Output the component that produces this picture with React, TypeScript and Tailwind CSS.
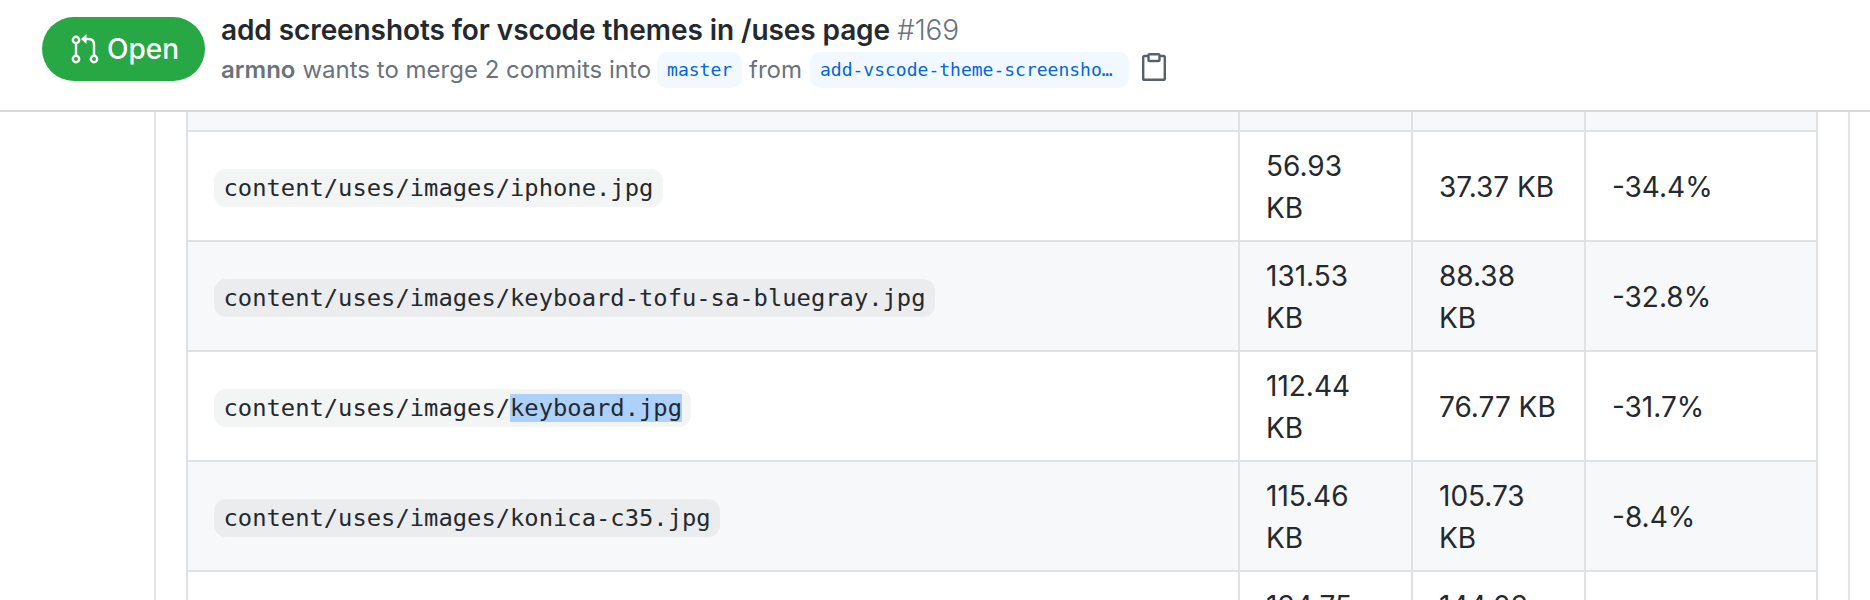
import React from "react";

const rows: { path: string; sel?: string; a: string; b: string; p: string }[] = [
  { path: "content/uses/images/iphone.jpg", a: "56.93 KB", b: "37.37 KB", p: "-34.4%" },
  { path: "content/uses/images/keyboard-tofu-sa-bluegray.jpg", a: "131.53 KB", b: "88.38 KB", p: "-32.8%" },
  { path: "content/uses/images/", sel: "keyboard.jpg", a: "112.44 KB", b: "76.77 KB", p: "-31.7%" },
  { path: "content/uses/images/konica-c35.jpg", a: "115.46 KB", b: "105.73 KB", p: "-8.4%" },
  { path: "content/uses/images/lens.jpg", a: "134.75 KB", b: "144.03 KB", p: "+6.9%" },
];

const PrIcon = () => (
  <svg width="28" height="32" viewBox="0 0 28 32" fill="none" stroke="currentColor" strokeWidth="2.4" className="shrink-0">
    <circle cx="5" cy="7" r="3.200" />
    <path d="M5 10.200V22.800" />
    <circle cx="5" cy="26" r="3.200" />
    <circle cx="23" cy="26" r="3.200" />
    <path d="M23 22.800V11.500Q23 6 17.500 6H14" />
    <path d="M10 6L15.500 1V11Z" fill="currentColor" stroke="none" />
  </svg>
);

const Clip = () => (
  <svg width="24" height="28" viewBox="0 0 24 28" fill="none" stroke="#586069" strokeWidth="2.4" className="shrink-0">
    <path d="M6 3H2.600a1.400 1.400 0 0 0-1.400 1.400v21a1.400 1.400 0 0 0 1.400 1.400h18.800a1.400 1.400 0 0 0 1.400-1.400v-21A1.400 1.400 0 0 0 21.400 3H18" />
    <rect x="6.500" y="1.200" width="11" height="6.800" rx="1" />
  </svg>
);

export default function App() {
  return (
    <div className="h-[600px] w-[1870px] overflow-hidden bg-white font-['Inter',sans-serif] text-[#24292e]">
      <header className="flex h-[112px] items-start border-b-2 border-[#d8d9da] bg-white pl-[42px]">
        <div className="mt-[17px] flex h-[64px] w-[163px] items-center justify-center gap-[8px] rounded-full bg-[#28a745] pl-[3px] text-[28px] font-[550] text-white">
          <PrIcon />
          <span>Open</span>
        </div>
        <div className="ml-[16px] mt-[12px]">
          <div className="text-[28px] leading-[36px] font-semibold tracking-[-0.09px] whitespace-nowrap">
            add screenshots for vscode themes in /uses page{" "}
            <span className="font-light text-[#6a737d]">#169</span>
          </div>
          <div className="mt-[4px] flex items-center text-[24px] leading-[36px] whitespace-nowrap text-[#6a737d]">
            <span className="font-semibold">armno</span>
            <span className="ml-[7px]">wants to merge 2 commits into</span>
            <span className="ml-[6px] flex h-[36px] items-center rounded-[10px] bg-[#f1f8ff] px-[10px] font-['DejaVu_Sans_Mono',monospace] text-[18px] text-[#0366d6]">master</span>
            <span className="ml-[7px]">from</span>
            <span className="ml-[8px] flex h-[36px] w-[319px] items-center rounded-[10px] bg-[#f1f8ff] px-[10px] font-['DejaVu_Sans_Mono',monospace] text-[18px] text-[#0366d6]">add-vscode-theme-screensho…</span>
            <span className="ml-[13px] flex -translate-y-[3px]"><Clip /></span>
          </div>
        </div>
      </header>
      <main className="ml-[154px] h-[488px] w-[1696px] overflow-hidden border-x-2 border-[#e1e4e8] pl-[30px]">
        <table className="w-[1630px] table-fixed border-collapse text-[28px] leading-[42px]">
          <colgroup>
            <col className="w-[1052px]" />
            <col className="w-[173px]" />
            <col className="w-[173px]" />
            <col className="w-[232px]" />
          </colgroup>
          <tbody>
            <tr className="h-[19px] bg-[#f6f8fa]">
              <td className="border-2 border-t-0 border-[#dfe2e5]"></td>
              <td className="border-2 border-t-0 border-[#dfe2e5]"></td>
              <td className="border-2 border-t-0 border-[#dfe2e5]"></td>
              <td className="border-2 border-t-0 border-[#dfe2e5]"></td>
            </tr>
            {rows.map((r, i) => (
              <tr key={r.path + (r.sel ?? "")} className={i % 2 === 1 ? "bg-[#f6f8fa]" : "bg-white"}>
                <td className="border-2 border-[#dfe2e5] px-[26px] pt-[13px] pb-[11px]">
                  <code className={"rounded-[12px] px-[9.5px] py-[4.8px] font-['DejaVu_Sans_Mono',monospace] text-[23.8px] " + (i % 2 === 1 ? "bg-[#ebecee]" : "bg-[#f3f4f4]")}>
                    {r.path}
                    {r.sel && <span className="bg-[#aed1fb]">{r.sel}</span>}
                  </code>
                </td>
                <td className="border-2 border-[#dfe2e5] px-[26px] pt-[13px] pb-[11px]">{r.a}</td>
                <td className="border-2 border-[#dfe2e5] px-[26px] pt-[13px] pb-[11px]">{r.b}</td>
                <td className="border-2 border-[#dfe2e5] px-[26px] pt-[13px] pb-[11px]">{r.p}</td>
              </tr>
            ))}
          </tbody>
        </table>
      </main>
    </div>
  );
}
